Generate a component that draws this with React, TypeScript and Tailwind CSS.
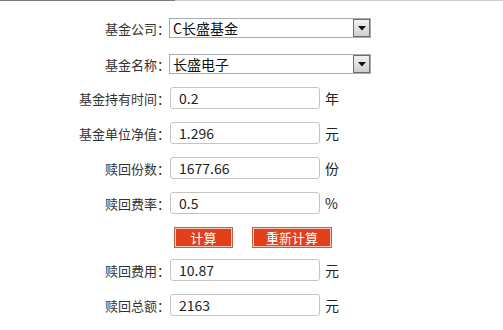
import React from "react";

const font = { fontFamily: '"Microsoft YaHei", "Noto Sans CJK SC", sans-serif' };

function Label({ text }: { text: string }) {
  return (
    <div className="w-[170px] shrink-0 text-right text-[13px] text-[#333] leading-none">
      {text}
    </div>
  );
}

function Select({ value }: { value: string }) {
  return (
    <div className="flex h-[20px] w-[202px] items-center border border-[#a5acb2] bg-white">
      <div className="flex-1 pl-[3px] text-[14px] leading-none text-[#111]">{value}</div>
      <div className="flex h-[18px] w-[17px] items-center justify-center border border-[#6e6e6e] bg-gradient-to-b from-[#f2f2f2] to-[#cfcfcf]">
        <svg width="8" height="5" viewBox="0 0 8 5">
          <path d="M0 0 H8 L4 4.5 Z" fill="#111" />
        </svg>
      </div>
    </div>
  );
}

function Input({ value, unit }: { value: string; unit: string }) {
  return (
    <>
      <div className="flex h-[22px] w-[150px] items-center rounded-[3px] border border-[#c4c4c4] bg-white pl-[8px] text-[14px] leading-none text-[#222]">
        {value}
      </div>
      <div className="ml-[5px] text-[14px] leading-none text-[#222]">{unit}</div>
    </>
  );
}

function Row({ mt, h, children }: { mt: string; h: string; children: React.ReactNode }) {
  return <div className={`flex items-center ${mt} ${h}`}>{children}</div>;
}

export default function App() {
  return (
    <div className="h-[330px] w-[503px] overflow-hidden bg-white" style={font}>
      <div className="flex h-px">
        <div className="w-[175px] bg-[#7a7a7a]" />
        <div className="flex-1 bg-[#cfcfcf]" />
      </div>
      <div className="mt-[17px] flex h-[20px] items-center">
        <Label text="基金公司：" />
        <div className="-ml-px">
          <Select value="C长盛基金" />
        </div>
      </div>
      <div className="mt-[16px] flex h-[20px] items-center">
        <Label text="基金名称：" />
        <div className="-ml-px">
          <Select value="长盛电子" />
        </div>
      </div>
      <div className="mt-[13px] flex h-[22px] items-center">
        <Label text="基金持有时间：" />
        <Input value="0.2" unit="年" />
      </div>
      <div className="mt-[13px] flex h-[22px] items-center">
        <Label text="基金单位净值：" />
        <Input value="1.296" unit="元" />
      </div>
      <div className="mt-[13px] flex h-[22px] items-center">
        <Label text="赎回份数：" />
        <Input value="1677.66" unit="份" />
      </div>
      <div className="mt-[13px] flex h-[22px] items-center">
        <Label text="赎回费率：" />
        <Input value="0.5" unit="%" />
      </div>
      <div className="mt-[13px] flex h-[21px] items-center">
        <div className="w-[174px] shrink-0" />
        <div className="flex h-[21px] w-[59px] items-center justify-center border border-[#b9654a] bg-[#e2401b] text-[13px] leading-none text-white shadow-[inset_0_0_0_1px_#f6c7b6]">
          计算
        </div>
        <div className="ml-[19px] flex h-[21px] w-[80px] items-center justify-center border border-[#b9654a] bg-[#e2401b] text-[13px] leading-none text-white shadow-[inset_0_0_0_1px_#f6c7b6]">
          重新计算
        </div>
      </div>
      <div className="mt-[11px] flex h-[22px] items-center">
        <Label text="赎回费用：" />
        <Input value="10.87" unit="元" />
      </div>
      <div className="mt-[13px] flex h-[22px] items-center">
        <Label text="赎回总额：" />
        <Input value="2163" unit="元" />
      </div>
    </div>
  );
}
